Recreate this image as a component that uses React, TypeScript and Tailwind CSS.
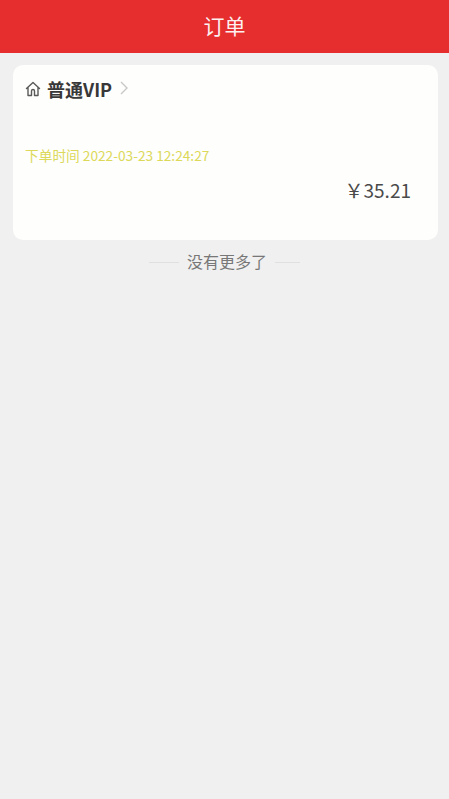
export default function App() {
  const font = { fontFamily: '"Noto Sans CJK SC", "Noto Sans", sans-serif' };
  return (
    <div className="min-h-[799px] bg-[#f0f0f0] flex flex-col" style={font}>
      <header className="h-[53px] pb-[2px] bg-[#e62e2e] flex items-center justify-center text-[#fdf0f0] text-[21px]">订单</header>
      <main className="pl-[13px] pr-[11px] pt-[12px] flex flex-col">
        <section className="h-[175px] bg-[#fefefc] rounded-[10px] pl-[12px] pr-[27px] flex flex-col">
          <div className="h-[48px] flex items-center">
            <svg width="16" height="16" viewBox="0 0 16 16" fill="none" stroke="#5a5a5a" strokeWidth="1.4" strokeLinejoin="round" strokeLinecap="round">
              <path d="M1.5 7.5 8 1.5l6.5 6M3 6.5V14.5h3.5v-4.5a1.5 1.5 0 0 1 3 0v4.5H13V6.5" />
            </svg>
            <span className="ml-[6px] text-[18px] font-bold text-[#383838] leading-none">普通VIP</span>
            <svg className="ml-[8px] mb-[3px]" width="8" height="14" viewBox="0 0 8 14" fill="none" stroke="#c8c8c8" strokeWidth="1.4">
              <path d="M1 1l6 6-6 6" />
            </svg>
          </div>
          <div className="mt-[33px] text-[13.7px] leading-[18px] text-[#dcd95a]">下单时间 2022-03-23 12:24:27</div>
          <div className="mt-[13px] text-right text-[19px] leading-[26px] text-[#4a4a4a]">￥35.21</div>
        </section>
        <div className="mt-[10px] pr-[2px] h-[24px] flex items-center justify-center text-[#777777] text-[16px]">
          <span className="w-[30px] h-px bg-[#e0e0e0]" />
          <span className="mx-[8px] pb-[2px]">没有更多了</span>
          <span className="w-[25px] h-px bg-[#e0e0e0]" />
        </div>
      </main>
    </div>
  );
}
